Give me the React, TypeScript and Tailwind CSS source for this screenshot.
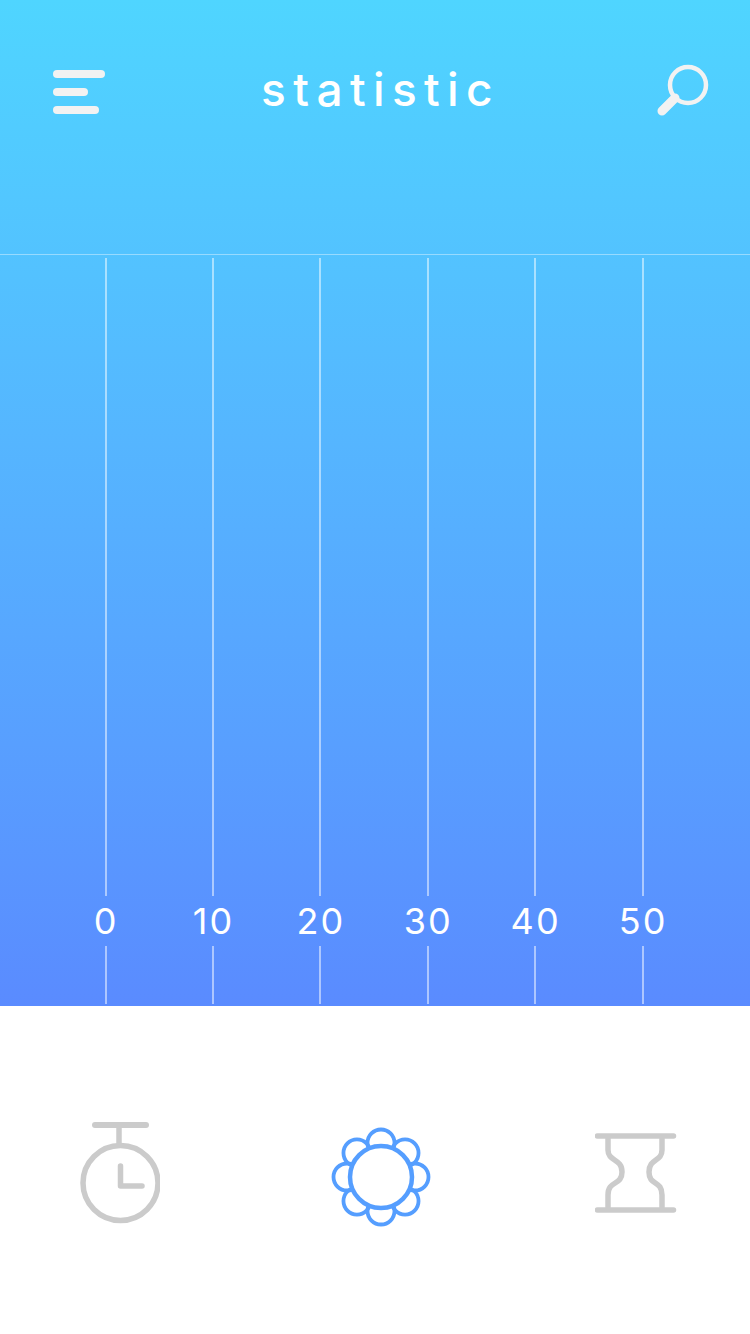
const ticks = ['0', '10', '20', '30', '40', '50'];

const petals = [0, 45, 90, 135, 180, 225, 270, 315];

function SearchIcon() {
  return (
    <svg width="54" height="52" viewBox="0 0 54 52" fill="none" stroke="#f2f2f2" className="block">
      <circle cx="32" cy="21" r="18" strokeWidth="4.5" />
      <path d="M6 47 L19 34" strokeWidth="9" strokeLinecap="round" />
    </svg>
  );
}

function TimerIcon() {
  return (
    <svg width="80" height="102" viewBox="0 0 80 102" fill="none" stroke="#cbcbcb" strokeWidth="5.5" strokeLinecap="round" strokeLinejoin="round" className="block">
      <path d="M15 3 H66" strokeWidth="6" />
      <path d="M39 3 V22" strokeLinecap="butt" />
      <circle cx="40.5" cy="61" r="37.5" />
      <path d="M40.5 44 V64 H62" />
    </svg>
  );
}

function FlowerIcon() {
  return (
    <svg width="100" height="100" viewBox="0 0 100 100" fill="none" stroke="#559eff" strokeWidth="3.8" className="block">
      {petals.map((deg) => (
        <circle key={deg} cx="50" cy="16" r="13.5" transform={`rotate(${deg} 50 50)`} />
      ))}
      <circle cx="50" cy="50" r="31" fill="white" strokeWidth="4.5" />
    </svg>
  );
}

function HourglassIcon() {
  return (
    <svg width="82" height="80" viewBox="0 0 82 80" fill="none" stroke="#cbcbcb" strokeWidth="5.5" strokeLinecap="round" className="block">
      <path d="M2.5 3 H78.5 M2.5 77 H78.5" />
      <path d="M13 3 V17 C13 29 27 25 27 39 C27 53 13 47 13 62 V77" strokeLinecap="butt" />
      <path d="M67 3 V17 C67 29 54 25 54 39 C54 53 67 47 67 62 V77" strokeLinecap="butt" />
    </svg>
  );
}

export default function App() {
  return (
    <div className="w-[750px] h-[1334px] flex flex-col bg-white font-['Inter',sans-serif]">
      <div className="h-[1006px] flex flex-col bg-gradient-to-b from-[#4fd5ff] to-[#5a8bff]">
        {/* Header */}
        <header className="h-[255px] flex items-start justify-between pt-[64px] pl-[53px] pr-[40px] border-b border-white/40">
          <div className="mt-[6px] w-[52px] flex flex-col gap-[10px]">
            <div className="h-[8px] w-[52px] rounded-full bg-[#f2f2f2]" />
            <div className="h-[8px] w-[35px] rounded-full bg-[#f2f2f2]" />
            <div className="h-[8px] w-[46px] rounded-full bg-[#f2f2f2]" />
          </div>
          <h1 className="-mt-[1px] text-[46px] leading-[52px] tracking-[0.16em] font-medium text-white">statistic</h1>
          <SearchIcon />
        </header>

        {/* Scale */}
        <div className="flex-1 grid grid-cols-[repeat(6,107.4px)] ml-[52px] pt-[3px] pb-[2px]">
          {ticks.map((tick) => (
            <div key={tick} className="flex flex-col items-center">
              <div className="flex-1 w-[2px] bg-white/50" />
              <span className="h-[50px] ml-[1px] leading-[50px] text-[36px] tracking-[0.06em] text-white">{tick}</span>
              <div className="h-[58px] w-[2px] bg-white/50" />
            </div>
          ))}
        </div>
      </div>

      {/* Bottom tabs */}
      <nav className="flex-1 flex items-start">
        <div className="ml-[80px] mt-[116px]">
          <TimerIcon />
        </div>
        <div className="ml-[171px] mt-[121px]">
          <FlowerIcon />
        </div>
        <div className="ml-[164px] mt-[127px]">
          <HourglassIcon />
        </div>
      </nav>
    </div>
  );
}
